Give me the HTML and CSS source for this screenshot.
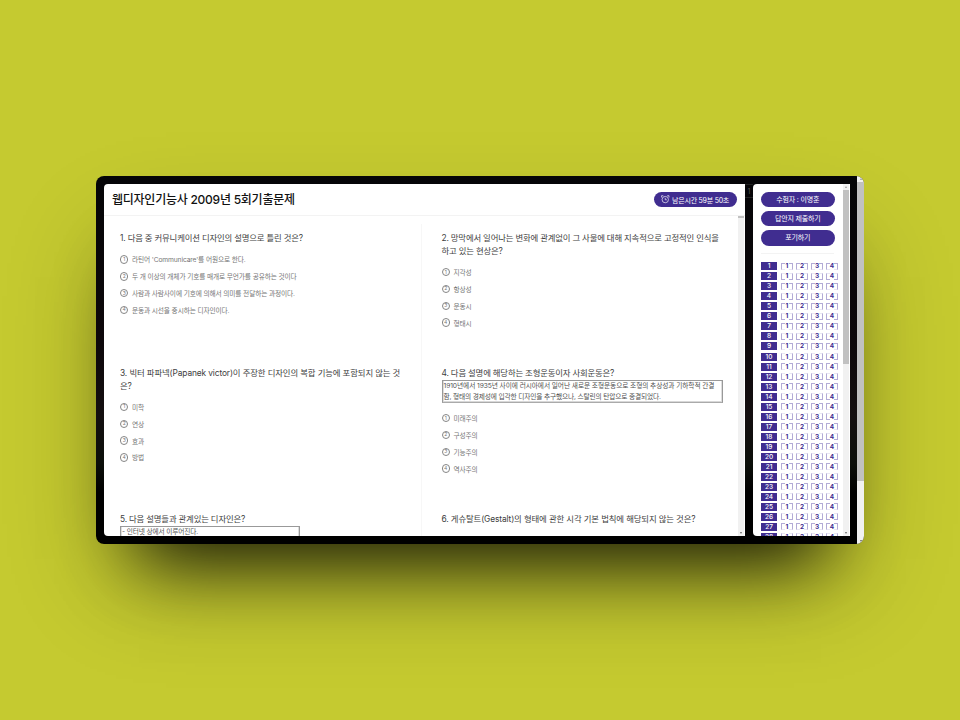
FILE: index.html
```
<!DOCTYPE html>
<html lang="ko">
<head>
<meta charset="utf-8">
<title>웹디자인기능사 2009년 5회기출문제</title>
<link rel="stylesheet" href="styles.css">
</head>
<body>
<div class="device">
  <main class="exam">
    <header class="exam-header">
      <h1>웹디자인기능사 2009년 5회기출문제</h1>
      <div class="timer">
        <svg viewBox="0 0 24 24" fill="none" stroke="currentColor" stroke-width="2.200"><circle cx="12" cy="13" r="9"/><path d="M1.500 7V2H6.500M17.500 2H22.500V7M12 8V13.500H16.500"/></svg>
        <span>남은시간 59분 50초</span>
      </div>
    </header>
    <div class="exam-body">
      <div class="questions">
        <section class="q">
          <h2>1. 다음 중 커뮤니케이션 디자인의 설명으로 틀린 것은?</h2>
          <ul>
            <li><i>1</i><span>라틴어 'Communicare'를 어원으로 한다.</span></li>
            <li><i>2</i><span>두 개 이상의 개체가 기호를 매개로 무언가를 공유하는 것이다</span></li>
            <li><i>3</i><span>사람과 사람사이에 기호에 의해서 의미를 전달하는 과정이다.</span></li>
            <li><i>4</i><span>운동과 시선을 중시하는 디자인이다.</span></li>
          </ul>
        </section>
        <section class="q">
          <h2>2. 망막에서 일어나는 변화에 관계없이 그 사물에 대해 지속적으로 고정적인 인식을<br>하고 있는 현상은?</h2>
          <ul>
            <li><i>1</i><span>지각성</span></li>
            <li><i>2</i><span>항상성</span></li>
            <li><i>3</i><span>운동시</span></li>
            <li><i>4</i><span>형태시</span></li>
          </ul>
        </section>
        <section class="q">
          <h2 class="mixed">3. 빅터 파파넥(Papanek victor)이 주장한 디자인의 복합 기능에 포함되지 않는 것<br>은?</h2>
          <ul>
            <li><i>1</i><span>미학</span></li>
            <li><i>2</i><span>연상</span></li>
            <li><i>3</i><span>효과</span></li>
            <li><i>4</i><span>방법</span></li>
          </ul>
        </section>
        <section class="q">
          <h2>4. 다음 설명에 해당하는 조형운동이자 사회운동은?</h2>
          <div class="note"><span class="note-lead">1910년에서 1935년 사이에 러시아에서 일어난 새로운 조형운동으로 조형의 추상성과 기하학적 간결</span><br>함, 형태의 경제성에 입각한 디자인을 추구했으나, 스탈린의 탄압으로 종결되었다.</div>
          <ul>
            <li><i>1</i><span>미래주의</span></li>
            <li><i>2</i><span>구성주의</span></li>
            <li><i>3</i><span>기능주의</span></li>
            <li><i>4</i><span>역사주의</span></li>
          </ul>
        </section>
        <section class="q">
          <h2>5. 다음 설명들과 관계있는 디자인은?</h2>
          <div class="note note-short">- 인터넷 상에서 이루어진다.</div>
        </section>
        <section class="q">
          <h2 class="mixed">6. 게슈탈트(Gestalt)의 형태에 관한 시각 기본 법칙에 해당되지 않는 것은?</h2>
        </section>
      </div>
      <div class="scroll scroll-exam"><b></b><em></em></div>
    </div>
  </main>
  <div class="gap"><span>1</span></div>
  <aside class="panel">
    <div class="panel-body">
      <div class="pill">수험자 : 이명훈</div>
      <div class="pill">답안지 제출하기</div>
      <div class="pill">포기하기</div>
      <hr>
      <div class="sheet" id="sheet"></div>
    </div>
    <div class="scroll scroll-panel"><u></u><b></b><em></em></div>
  </aside>
  <div class="scroll scroll-page"><u></u><b></b><em></em></div>
</div>
<script src="script.js"></script>
</body>
</html>
```
FILE: styles.css
```
* { box-sizing: border-box; }
body {
  margin: 0;
  width: 960px;
  height: 720px;
  overflow: hidden;
  display: flex;
  align-items: center;
  justify-content: center;
  background: #c5ca30;
  font-family: Inter, "Noto Sans CJK KR", sans-serif;
  color: #333;
}
.device {
  width: 768px;
  height: 368px;
  display: flex;
  border-radius: 8px;
  overflow: hidden;
  background: linear-gradient(#050507 0, #0d080b 45%, #140f10 65%, #0c0f0a 78%, #000 86%);
  box-shadow: 0 50px 100px -20px rgba(0, 0, 0, .3), 0 58px 70px -43px rgba(0, 0, 0, .85);
}
.exam {
  margin: 8px 0 8px 8px;
  width: 641px;
  background: #fff;
  border-radius: 4px 0 0 4px;
  overflow: hidden;
  display: flex;
  flex-direction: column;
}
.exam-header {
  height: 32px;
  flex: none;
  display: flex;
  align-items: center;
  justify-content: space-between;
  padding: 0 8px;
  border-bottom: 1px solid #f3f3f3;
}
h1 {
  margin: 0;
  font-size: 12px;
  line-height: 16px;
  font-weight: 500;
  letter-spacing: -.25px;
  color: #111;
  white-space: nowrap;
}
.timer {
  width: 83px;
  height: 15.500px;
  border-radius: 8px;
  background: #402d90;
  color: #fff;
  display: flex;
  align-items: center;
  padding-left: 7px;
  gap: 2.500px;
  font-size: 7px;
  letter-spacing: -.23px;
  white-space: nowrap;
}
.timer svg { width: 8.500px; height: 8.500px; opacity: .85; }
.exam-body { flex: 1; display: flex; min-height: 0; }
.questions {
  flex: 1;
  display: grid;
  grid-template-columns: 321.500px 1fr;
  align-content: start;
  padding: 16.200px 0 0 16px;
  overflow: hidden;
  background: linear-gradient(#f7f7f7, #f7f7f7) 317px 8px / 1px 100% no-repeat;
}
.q { padding-bottom: 36px; }
h2 {
  margin: 0;
  font-size: 8.400px;
  line-height: 12.600px;
  font-weight: 400;
  letter-spacing: -.18px;
  color: #404040;
  white-space: nowrap;
}
h2.mixed { letter-spacing: -.12px; }
ul { list-style: none; margin: 6.300px 0 0; padding: 0; }
li {
  height: 16.840px;
  display: flex;
  align-items: center;
  gap: 3.600px;
  font-size: 6.700px;
  letter-spacing: -.13px;
  color: #757575;
  white-space: nowrap;
}
li i {
  width: 8.400px;
  height: 8.400px;
  display: flex;
  align-items: center;
  justify-content: center;
  border: 1px solid #858585;
  border-radius: 50%;
  font-style: normal;
  font-size: 5px;
  line-height: 5px;
  letter-spacing: 0;
}
.note {
  margin-top: .8px;
  width: 281px;
  height: 23px;
  border: 1px solid #999;
  border-bottom-color: #aaa;
  box-shadow: inset 0 -1px #d8d8d8, inset 1px 0 #ddd, inset -1px 0 #ddd;
  padding: 0 1px;
  font-size: 6.700px;
  line-height: 10.200px;
  letter-spacing: -.15px;
  color: #505050;
  white-space: nowrap;
}
.note-lead { letter-spacing: -.08px; }
.note-short { width: 180px; }
.gap { width: 8px; padding-top: 8px; font-size: 7px; color: #555; text-align: center; }
.gap span { display: block; height: 14px; line-height: 14px; border: 1px solid #222; border-width: 1px 0; }
.panel {
  margin: 8px 0;
  width: 97px;
  background: #fff;
  border-radius: 4px 0 0 4px;
  overflow: hidden;
  display: flex;
}
.panel-body { flex: 1; padding: 8px 0 0 8px; overflow: hidden; }
.pill {
  width: 73.500px;
  height: 15.300px;
  margin-bottom: 3.900px;
  border-radius: 8px;
  background: #402d90;
  color: #fff;
  font-size: 7px;
  line-height: 15px;
  letter-spacing: -.2px;
  text-align: center;
}
hr { margin: 7.400px 0 7.300px; width: 73px; border: 0; border-top: 1px solid #f3f3f3; }
.row { height: 10.030px; display: flex; align-items: center; gap: 3px; font-size: 6.500px; font-weight: 700; }
.num { width: 16px; height: 8px; margin-right: 1px; background: #402d90; color: #fff; line-height: 8px; text-align: center; font-weight: 500; }
.mark {
  width: 12px;
  height: 6px;
  display: flex;
  align-items: center;
  justify-content: space-between;
  color: #402d90;
  line-height: 6px;
}
.mark::before, .mark::after { content: ""; width: 3px; height: 5px; border: 1px solid #b3abd6; }
.mark::before { border-right: 0; }
.mark::after { border-left: 0; }
.row:nth-child(odd) .mark::before, .row:nth-child(odd) .mark::after { border-bottom-color: #e9e6f4; }
.row:nth-child(even) .mark::before, .row:nth-child(even) .mark::after { border-top-color: #e9e6f4; }
.scroll { display: flex; flex-direction: column; align-items: center; background: #f1f1f1; }
.scroll b { width: 100%; background: #c1c1c1; }
.scroll u, .scroll em { height: 6px; width: 100%; display: flex; align-items: center; justify-content: center; }
.scroll em { margin-top: auto; }
.scroll u::before, .scroll em::before { content: ""; border: 1.500px solid transparent; }
.scroll u::before { border-bottom: 2px solid #999; border-top: 0; }
.scroll em::before { border-top: 2px solid #666; border-bottom: 0; }
.scroll-exam { width: 6px; margin-right: 1px; }
.scroll-exam b { height: 2px; }
.scroll-panel { width: 6px; margin-right: 1px; }
.scroll-panel b { height: 174px; }
.scroll-page { width: 7px; margin-left: auto; }
.scroll-page b { height: 299px; }
```
FILE: script.js
```
const sheet = document.getElementById("sheet");
for (let n = 1; n <= 28; n++) {
  const row = document.createElement("div");
  row.className = "row";
  row.innerHTML = `<span class="num">${n}</span>` + [1, 2, 3, 4].map(k => `<span class="mark">${k}</span>`).join("");
  sheet.append(row);
}
```
